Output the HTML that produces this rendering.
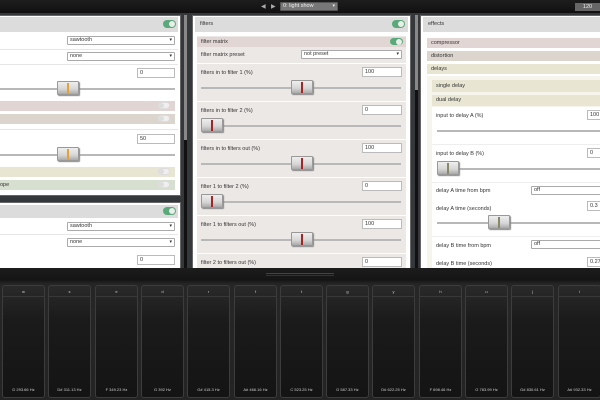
<!DOCTYPE html><html><head><style>
*{box-sizing:border-box;margin:0;padding:0}
body{width:600px;height:400px;overflow:hidden;background:#34383b;font-family:"Liberation Sans",sans-serif;font-size:5.5px;color:#333;position:relative}
.a{position:absolute}
.tgl{position:absolute;width:13px;height:8px;border-radius:4px;background:#5aa97a}
.tgl::after{content:"";position:absolute;right:1px;top:1px;width:6px;height:6px;border-radius:3px;background:#e8efe9}
.tgo{position:absolute;width:12px;height:7px;border-radius:4px;background:#f0eeee;border:1px solid #ddd}
.tgo::after{content:"";position:absolute;left:0;top:0;width:5px;height:5px;border-radius:3px;background:#ddd}
.sel{position:absolute;height:9px;background:#fff;border:1px solid #aaa;border-radius:1px;padding-left:2px;line-height:7px;font-size:5.5px}
.sel::after{content:"▾";position:absolute;right:2px;top:0;font-size:5px}
.num{position:absolute;height:10px;background:#fff;border:1px solid #bbb;padding-left:2px;line-height:8px}
.trk{position:absolute;height:2px;background:#b8b8b8}
.th{position:absolute;width:22px;height:14px;background:linear-gradient(#eee,#d6d6d6 60%,#aaa);border:1px solid #999;border-radius:1px;box-shadow:1px 1px 1px #888}
.th i{position:absolute;left:9px;top:1px;width:2px;height:11px;background:#a22}
.row{position:absolute;height:10px;line-height:10px;padding-left:4px}
.key{position:absolute;top:285px;width:43px;height:113px;border:1px solid #3c3c3c;border-radius:3px;background:linear-gradient(#2a2a2a,#1b1b1b 30%,#141414);color:#ccc;font-size:4px;text-align:center}
.key b{position:absolute;top:3px;left:0;right:0;font-weight:normal}
.key span{position:absolute;bottom:5px;left:0;right:0}
.key::before{content:"";position:absolute;left:0;right:0;top:10px;border-top:1px solid #383838}
.pn{position:absolute;background:#fff;border:1px solid #666}
</style></head><body>
<div class="a" style="left:0;top:0;width:600px;height:13px;background:linear-gradient(#1d1d1d,#111)"></div>
<div class="a" style="left:261px;top:3px;color:#aaa;font-size:6px">◀</div>
<div class="a" style="left:271px;top:3px;color:#aaa;font-size:6px">▶</div>
<div class="sel" style="left:280px;top:2px;width:58px;height:9px;background:#777;border-color:#555;color:#eee">0: light show</div>
<div class="a" style="left:575px;top:3px;width:25px;height:8px;background:#666;color:#eee;text-align:center;line-height:8px">120</div>

<div class="pn" style="left:-1px;top:15px;width:182px;height:181px"></div>
<div class="a" style="left:0;top:17px;width:178px;height:15px;background:#dcdcdc"></div>
<div class="tgl" style="left:163px;top:20px"></div>
<div class="sel" style="left:67px;top:36px;width:108px">sawtooth</div>
<div class="a" style="left:0;top:49px;width:178px;border-top:1px solid #e6e6e6"></div>
<div class="sel" style="left:67px;top:52px;width:108px">none</div>
<div class="a" style="left:0;top:64px;width:178px;border-top:1px solid #e6e6e6"></div>
<div class="num" style="left:137px;top:68px;width:38px">0</div>
<div class="trk" style="left:0;top:88px;width:175px"></div>
<div class="th" style="left:57px;top:81px"><i style="background:#e8a030"></i></div>
<div class="row" style="left:0;top:101px;width:175px;background:#e0d5d3"></div><div class="tgo" style="left:158px;top:102px"></div>
<div class="row" style="left:0;top:114px;width:175px;background:#dcd5ce"></div><div class="tgo" style="left:158px;top:115px"></div>
<div class="a" style="left:0;top:129px;width:178px;border-top:1px solid #e6e6e6"></div>
<div class="num" style="left:137px;top:134px;width:38px">50</div>
<div class="trk" style="left:0;top:154px;width:175px"></div>
<div class="th" style="left:57px;top:147px"><i style="background:#e8a030"></i></div>
<div class="row" style="left:0;top:167px;width:175px;background:#e8e6d2"></div><div class="tgo" style="left:158px;top:168px"></div>
<div class="row" style="left:0;top:180px;width:175px;background:#d6dfd0;padding-left:0">ope</div><div class="tgo" style="left:158px;top:181px"></div>
<div class="pn" style="left:-1px;top:202px;width:182px;height:70px"></div>
<div class="a" style="left:0;top:205px;width:178px;height:13px;background:#dcdcdc"></div>
<div class="tgl" style="left:163px;top:207px"></div>
<div class="sel" style="left:67px;top:222px;width:108px">sawtooth</div>
<div class="a" style="left:0;top:234px;width:178px;border-top:1px solid #e6e6e6"></div>
<div class="sel" style="left:67px;top:238px;width:108px">none</div>
<div class="num" style="left:137px;top:255px;width:38px">0</div>
<div class="a" style="left:184px;top:15px;width:3px;height:125px;background:#888"></div>
<div class="a" style="left:184px;top:140px;width:3px;height:128px;background:#111"></div>

<div class="pn" style="left:192px;top:15px;width:219px;height:258px"></div>
<div class="a" style="left:195px;top:17px;width:213px;height:15px;background:#dcdcdc;padding:4px 0 0 5px">filters</div>
<div class="tgl" style="left:392px;top:20px"></div>
<div class="a" style="left:197px;top:36px;width:209px;height:232px;background:#ece8e6"></div>
<div class="row" style="left:197px;top:37px;width:209px;background:#e2d6d5">filter matrix</div>
<div class="tgl" style="left:390px;top:38px;height:7px"></div>
<div class="a" style="left:201px;top:52px">filter matrix preset</div>
<div class="sel" style="left:301px;top:50px;width:101px">not preset</div>
<div id="mid"></div>
<div class="a" style="left:415px;top:15px;width:3px;height:75px;background:#888"></div>
<div class="a" style="left:415px;top:90px;width:3px;height:178px;background:#111"></div>

<div class="pn" style="left:420px;top:15px;width:182px;height:258px"></div>
<div class="a" style="left:423px;top:17px;width:177px;height:15px;background:#dcdcdc;padding:4px 0 0 5px">effects</div>
<div class="row" style="left:427px;top:38px;width:173px;background:#e2d6d5">compressor</div>
<div class="row" style="left:427px;top:51px;width:173px;background:#dcd5ce">distortion</div>
<div class="row" style="left:427px;top:64px;width:173px;background:#e8e6d2">delays</div>
<div class="a" style="left:427px;top:76px;width:173px;height:192px;background:#f6f5ec"></div>
<div class="row" style="left:432px;top:80px;width:168px;height:12px;line-height:12px;background:#e8e6d2">single delay</div>
<div class="row" style="left:432px;top:95px;width:168px;height:11px;line-height:11px;background:#e8e6d2">dual delay</div>
<div class="a" style="left:432px;top:107px;width:168px;height:161px;background:#fff"></div>
<div class="a" style="left:436px;top:113px">input to delay A (%)</div>
<div class="num" style="left:587px;top:110px;width:20px">100</div>
<div class="trk" style="left:437px;top:130px;width:163px"></div>
<div class="a" style="left:432px;top:144px;width:168px;border-top:1px solid #eee"></div>
<div class="a" style="left:436px;top:151px">input to delay B (%)</div>
<div class="num" style="left:587px;top:148px;width:20px">0</div>
<div class="trk" style="left:437px;top:168px;width:163px"></div>
<div class="th" style="left:437px;top:161px"><i style="background:#886"></i></div>
<div class="a" style="left:432px;top:182px;width:168px;border-top:1px solid #eee"></div>
<div class="a" style="left:436px;top:188px">delay A time from bpm</div>
<div class="sel" style="left:531px;top:186px;width:75px">off</div>
<div class="a" style="left:436px;top:206px">delay A time (seconds)</div>
<div class="num" style="left:587px;top:201px;width:20px">0.3</div>
<div class="trk" style="left:437px;top:222px;width:163px"></div>
<div class="th" style="left:488px;top:215px"><i style="background:#886"></i></div>
<div class="a" style="left:432px;top:236px;width:168px;border-top:1px solid #eee"></div>
<div class="a" style="left:436px;top:243px">delay B time from bpm</div>
<div class="sel" style="left:531px;top:240px;width:75px">off</div>
<div class="a" style="left:436px;top:261px">delay B time (seconds)</div>
<div class="num" style="left:587px;top:257px;width:20px">0.27</div>

<div class="a" style="left:0;top:268px;width:600px;height:132px;background:linear-gradient(#1c1c1c,#151515 12px,#262626 16px,#242424)"></div>
<div class="a" style="left:266px;top:273px;width:68px;height:3px;border-top:1px solid #444;border-bottom:1px solid #333"></div>
<div id="keys"></div>
<script>
var m='';var L=[["filters in to filter 1 (%)","100",291],["filters in to filter 2 (%)","0",201],["filters in to filters out (%)","100",291],["filter 1 to filter 2 (%)","0",201],["filter 1 to filters out (%)","100",291],["filter 2 to filters out (%)","0",201]];
L.forEach(function(r,i){var t=63+i*38;m+='<div class="a" style="left:197px;top:'+t+'px;width:209px;border-top:1px solid #fff"></div><div class="a" style="left:201px;top:'+(t+7)+'px">'+r[0]+'</div><div class="num" style="left:362px;top:'+(t+4)+'px;width:40px">'+r[1]+'</div><div class="trk" style="left:201px;top:'+(t+24)+'px;width:200px"></div><div class="th" style="left:'+r[2]+'px;top:'+(t+17)+'px"><i></i></div>';});
document.getElementById('mid').innerHTML=m;
var k='';var ls="wsedrftgyhuji",f=["D 293.66 Hz","D# 311.13 Hz","F 349.23 Hz","G 392 Hz","G# 415.3 Hz","A# 466.16 Hz","C 523.25 Hz","D 587.33 Hz","D# 622.25 Hz","F 698.46 Hz","G 783.99 Hz","G# 830.61 Hz","A# 932.33 Hz"];
for(var i=0;i<13;i++){k+='<div class="key" style="left:'+Math.round(2+i*46.3)+'px"><b>'+ls[i]+'</b><span>'+f[i]+'</span></div>';}
document.getElementById('keys').innerHTML=k;
</script>
</body></html>
